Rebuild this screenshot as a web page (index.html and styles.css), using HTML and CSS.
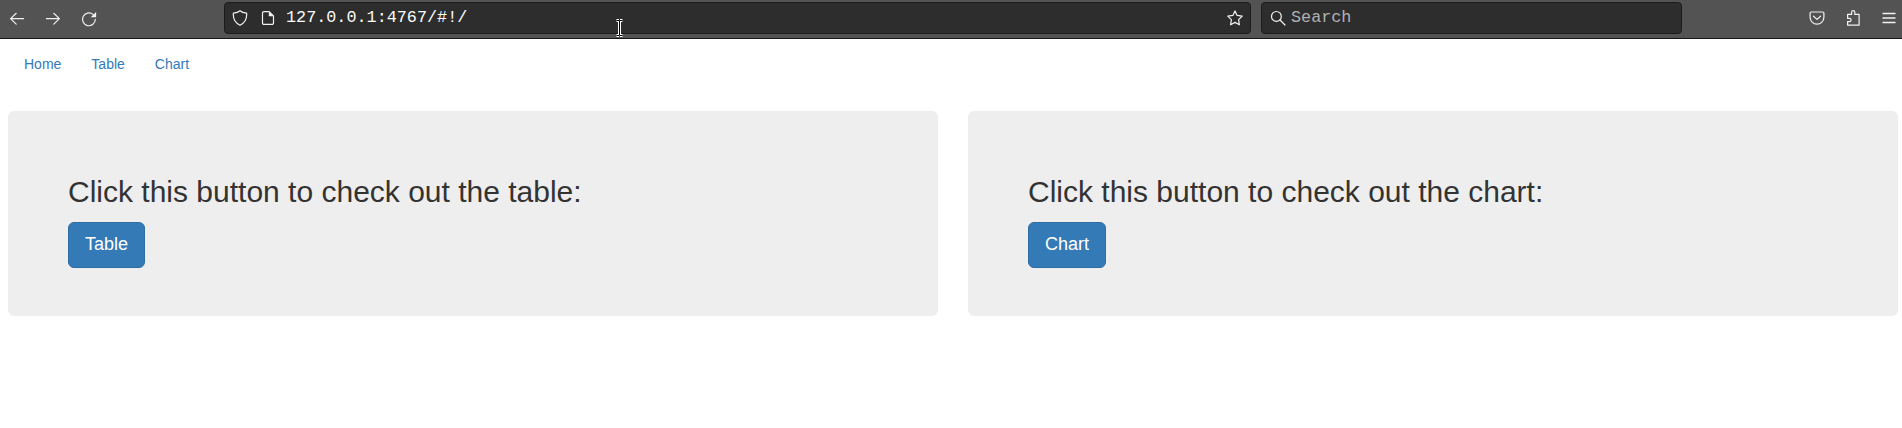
FILE: index.html
```html
<!DOCTYPE html>
<html lang="en">
<head>
<meta charset="utf-8">
<title>Home</title>
<link rel="stylesheet" href="styles.css">
</head>
<body>
<header class="toolbar">
  <div class="history">
    <svg class="icon" viewBox="0 0 16 16"><path d="M14.6 7.6H1.6M7.2 2.3 1.6 7.6l5.6 5.5"/></svg>
    <svg class="icon" viewBox="0 0 16 16"><path d="M1.4 7.6h12.8M8.8 2.3 14.4 7.6l-5.6 5.5"/></svg>
    <svg class="icon" viewBox="0 0 16 16"><path d="M14.3 8.3A6.4 6.4 0 1 1 12 3.4"/><path class="solid" d="M15.1 1v5.2H9.7z"/></svg>
  </div>
  <div class="field address">
    <svg class="icon" viewBox="0 0 16 16"><path d="M8 .8C6.6 2.1 4.2 2.9 1.4 3.1 .9 8.3 3.4 13 8 15.2c4.6-2.2 7.1-6.9 6.6-12.1C11.8 2.9 9.4 2.1 8 .8z"/></svg>
    <svg class="icon page" viewBox="0 0 16 16"><path d="M9.2 1.6H4a1.5 1.5 0 0 0-1.5 1.5v9.8A1.5 1.5 0 0 0 4 14.4h8a1.5 1.5 0 0 0 1.5-1.5v-7z"/><path class="solid" d="M8.8 1.4v4.8h4.9z"/></svg>
    <span class="url">127.0.0.1:4767/#!/</span>
    <svg class="icon star" viewBox="0 0 16 16"><path d="m8 .9 2.1 4.5 5.1.7-3.6 3.5.8 5.2L8 12.4l-4.4 2.4.8-5.2L.8 6.1l5.1-.7z"/></svg>
  </div>
  <div class="field search">
    <svg class="icon" viewBox="0 0 16 16"><circle cx="6.4" cy="6.4" r="4.9"/><path d="m10 10 5 5"/></svg>
    <span class="hint">Search</span>
  </div>
  <div class="actions">
    <svg class="icon" viewBox="0 0 16 16"><path d="M2.4 2h11.2a1.3 1.3 0 0 1 1.3 1.3v3.9a6.9 6.9 0 0 1-13.8 0V3.3A1.3 1.3 0 0 1 2.4 2z"/><path d="M4.5 6.2 8 9.4l3.5-3.2"/></svg>
    <svg class="icon" viewBox="0 0 16 16"><path d="M2.6 7.6V4.4h4V2.2a1.6 1.6 0 0 1 3.2 0v2.2h4.3v10.8H2.6v-3.6h1.9a1.5 1.5 0 0 0 0-3.2H2.6z"/></svg>
    <svg class="icon menu" viewBox="0 0 16 16"><path d="M2 3.5h12M2 8h12M2 12.5h12"/></svg>
  </div>
  <svg class="pointer" viewBox="0 0 9 18"><path class="halo" d="M1.5 1.5H4M5 1.5h2.5M4.5 2v14M1.5 16.5H4M5 16.5h2.5"/><path class="beam" d="M1.5 1.5H4M5 1.5h2.5M4.5 2v14M1.5 16.5H4M5 16.5h2.5"/></svg>
</header>
<nav class="nav">
  <a class="nav-link">Home</a>
  <a class="nav-link">Table</a>
  <a class="nav-link">Chart</a>
</nav>
<main class="cards">
  <section class="card">
    <h2 class="title">Click this button to check out the table:</h2>
    <a class="button">Table</a>
  </section>
  <section class="card">
    <h2 class="title">Click this button to check out the chart:</h2>
    <a class="button">Chart</a>
  </section>
</main>
</body>
</html>
```
FILE: styles.css
```css
* { box-sizing: border-box; }
body {
  margin: 0;
  background: #fff;
  color: #333;
  font: 14px/20px "Liberation Sans", Arial, sans-serif;
}
.toolbar {
  position: relative;
  display: flex;
  height: 39px;
  padding: 2px 4px 0 8px;
  background: #535353;
  border-bottom: 1px solid #151417;
}
.icon {
  width: 16px;
  height: 16px;
  flex: none;
  fill: none;
  stroke: #f2f2f2;
  stroke-width: 1.2;
  stroke-linecap: round;
  stroke-linejoin: round;
}
.icon .solid { fill: #f2f2f2; stroke: none; }
.history {
  display: flex;
  gap: 20px;
  width: 216px;
  padding: 9px 0 0 1px;
}
.field {
  display: flex;
  align-items: center;
  height: 32px;
  background: #2d2d2d;
  border: 1px solid #1c1b1f;
  border-radius: 4px;
  font: 16.8px/20px "Liberation Mono", monospace;
}
.address { width: 1027px; padding: 0 7px; }
.page { margin-left: 12px; }
.url { flex: 1; margin: -1px 0 0 10px; color: #fbfbfb; }
.search { width: 421px; margin-left: 10px; padding: 0 8px; }
.hint { margin: -1px 0 0 5px; color: #b0b0b0; }
.actions {
  display: flex;
  gap: 20px;
  margin-left: auto;
  padding: 8px 1px 0 0;
}
.menu { stroke-width: 1.4; }
.pointer {
  position: absolute;
  left: 615px;
  top: 19px;
  width: 9px;
  height: 18px;
  fill: none;
}
.halo { stroke: #fff; stroke-width: 3; }
.beam { stroke: #000; stroke-width: 1; }
.nav { display: flex; padding: 5px 9px 0; }
.nav-link { padding: 10px 15px; color: #337ab7; }
.cards {
  display: grid;
  grid-template-columns: 1fr 1fr;
  gap: 30px;
  padding: 27px 4px 0 8px;
}
.card {
  height: 205px;
  padding: 64px 60px 48px;
  background: #eee;
  border-radius: 6px;
}
.title {
  margin: 0 0 14px;
  font-size: 30px;
  font-weight: 500;
  line-height: 33px;
}
.button {
  display: inline-block;
  padding: 9px 16px 11px;
  background: #337ab7;
  border: 1px solid #2e6da4;
  border-radius: 6px;
  color: #fff;
  font-size: 18px;
  line-height: 24px;
}
```
